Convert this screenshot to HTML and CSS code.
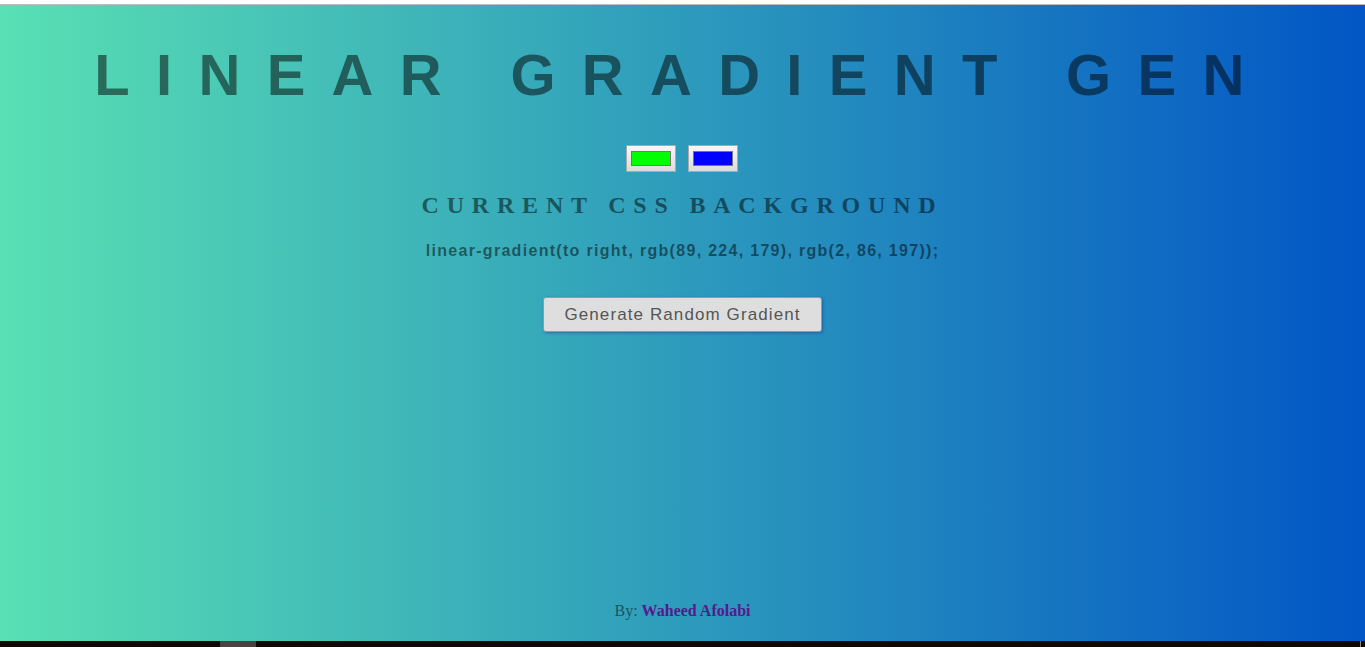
FILE: index.html
```html
<!DOCTYPE html>
<html lang="en">
<head>
<meta charset="utf-8">
<title>Linear Gradient Generator</title>
<link rel="stylesheet" href="styles.css">
</head>
<body>
  <div class="top-strip"></div>
  <main class="page">
    <h1 class="title">LINEAR GRADIENT GEN</h1>
    <div class="pickers">
      <input class="picker" type="color" value="#00ff00" aria-label="First colour">
      <input class="picker" type="color" value="#0000ff" aria-label="Second colour">
    </div>
    <h2 class="subtitle">CURRENT CSS BACKGROUND</h2>
    <h3 class="code">linear-gradient(to right, rgb(89, 224, 179), rgb(2, 86, 197));</h3>
    <button class="random-btn" type="button">Generate Random Gradient</button>
    <footer class="footer">By: <a class="author" href="#">Waheed Afolabi</a></footer>
  </main>
  <div class="bottom-bar"><span class="bar-tab"></span><span class="bar-edge"></span></div>
</body>
</html>
```
FILE: styles.css
```css
html, body {
  margin: 0;
  padding: 0;
  height: 100%;
}

body {
  display: flex;
  flex-direction: column;
  height: 100vh;
  overflow: hidden;
  background: #ffffff;
  font-family: "Liberation Sans", Arial, sans-serif;
}

.top-strip {
  flex: 0 0 4px;
  background: #ffffff;
  border-bottom: 1px solid #bdbdbd;
}

.page {
  flex: 1 1 auto;
  display: flex;
  flex-direction: column;
  align-items: center;
  padding: 41px 0 22px;
  background: linear-gradient(to right, rgb(89, 224, 179), rgb(2, 86, 197));
  color: rgba(0, 0, 0, 0.5);
  min-height: 0;
}

.title {
  align-self: stretch;
  margin: 0;
  text-align: center;
  font-family: "Liberation Sans", Arial, sans-serif;
  font-weight: bold;
  font-size: 58px;
  line-height: 58px;
  letter-spacing: 26.3px;
  white-space: nowrap;
}

.pickers {
  display: flex;
  gap: 12px;
  margin-top: 41px;
  margin-right: 1px;
}

.picker {
  -webkit-appearance: none;
  appearance: none;
  box-sizing: border-box;
  width: 50px;
  height: 27px;
  margin: 0;
  padding: 0;
  border: 1px solid #a9a9a9;
  background: linear-gradient(#f7f7f7, #dcdcdc);
  cursor: pointer;
}

.picker::-webkit-color-swatch-wrapper {
  padding: 5px 4px;
}

.picker::-webkit-color-swatch {
  border: 1px solid #777777;
  border-radius: 0;
}

.subtitle {
  margin: 21px 0 0;
  font-family: "Liberation Serif", "Times New Roman", serif;
  font-weight: bold;
  font-size: 24px;
  line-height: 24px;
  letter-spacing: 7.8px;
}

.code {
  margin: 26px 0 0;
  font-family: "Liberation Sans", Arial, sans-serif;
  font-weight: bold;
  font-size: 16px;
  line-height: 16px;
  letter-spacing: 1.3px;
}

.random-btn {
  margin-top: 38px;
  padding: 6px 20px;
  font-family: "Liberation Sans", Arial, sans-serif;
  font-size: 17px;
  line-height: 21px;
  letter-spacing: 1.1px;
  color: #555555;
  background: #dedede;
  border: 1px solid #8c9bb0;
  border-radius: 3px;
  box-shadow: 1px 1px 3px rgba(30, 60, 140, 0.55);
  cursor: pointer;
}

.footer {
  margin-top: auto;
  font-family: "Liberation Serif", "Times New Roman", serif;
  font-size: 16px;
  line-height: 16px;
  color: rgba(0, 0, 0, 0.5);
}

.author {
  color: #551a8b;
  font-weight: bold;
  text-decoration: none;
}

.bottom-bar {
  flex: 0 0 6px;
  display: flex;
  background: #0c0a06;
}

.bar-tab {
  width: 36px;
  margin-left: 220px;
  background: #474441;
}

.bar-edge {
  width: 1px;
  margin-left: auto;
  margin-right: 4px;
  background: #8a8a8a;
}
```
